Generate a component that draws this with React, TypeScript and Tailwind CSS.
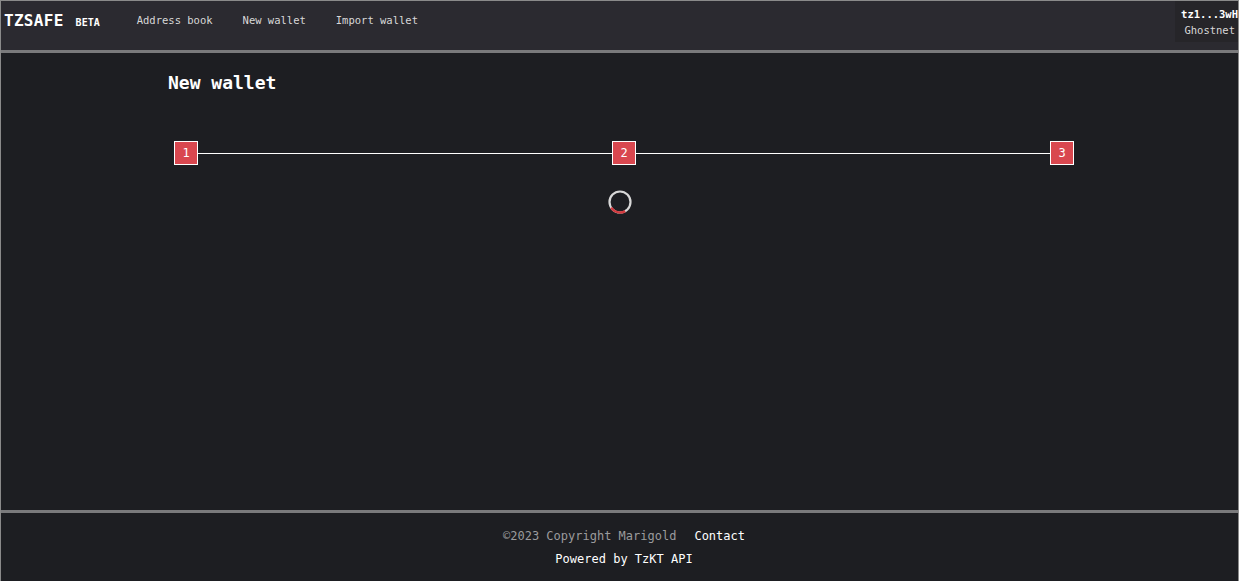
const mono = { fontFamily: '"DejaVu Sans Mono", "Liberation Mono", monospace' };

const Step = ({ n }: { n: number }) => (
  <div className="w-6 h-6 shrink-0 bg-[#d9474f] border border-white flex items-center justify-center text-[12px] text-white">
    {n}
  </div>
);

const Spinner = () => (
  <svg width="26" height="26" viewBox="0 0 26 26">
    <circle cx="13" cy="13" r="10.5" fill="none" stroke="#d8d8d8" strokeWidth="2.2" />
    <path d="M4.2 18.6 A10.5 10.5 0 0 0 18.2 22.1" fill="none" stroke="#d23a3f" strokeWidth="2.4" />
  </svg>
);

const App = () => {
  return (
    <div className="h-screen flex flex-col bg-[#1d1e22] border-l border-t border-r border-[#8a8a8a] text-white" style={mono}>
      {/* header */}
      <header className="h-[52px] shrink-0 bg-[#2b2a30] border-b-[3px] border-[#7a7a7c] flex items-start">
        <div className="flex items-center h-[40px] pl-[3px]">
          <span className="text-[16px] font-bold tracking-[0.3px]">TZSAFE</span>
          <span className="text-[10px] font-bold ml-[12px] mt-[3px]">BETA</span>
        </div>
        <nav className="flex items-center h-[40px] text-[10.5px] text-[#d8d8d8] ml-[37px] gap-[30px]">
          <span>Address book</span>
          <span>New wallet</span>
          <span>Import wallet</span>
        </nav>
        <div className="ml-auto h-[41px] w-[63px] bg-[#262529] flex flex-col items-end justify-center text-[10.5px] leading-[16px]">
          <span className="font-bold">tz1...3wH</span>
          <span className="text-[#d8d8d8] pr-[3px]">Ghostnet</span>
        </div>
      </header>

      {/* main */}
      <main className="flex-1 flex flex-col">
        <div className="ml-[167px] w-[912px] pt-[19px]">
          <h1 className="text-[18px] font-bold leading-[22px]">New wallet</h1>
          <div className="mt-[47px] px-[6px] flex items-center">
            <Step n={1} />
            <div className="flex-1 h-px bg-white" />
            <Step n={2} />
            <div className="flex-1 h-px bg-white" />
            <Step n={3} />
          </div>
        </div>
        <div className="flex justify-center mt-[24px]">
          <Spinner />
        </div>
      </main>

      {/* footer */}
      <footer className="h-[71px] shrink-0 border-t-[3px] border-[#7a7a7c] flex flex-col items-center pl-[9px] pt-[12px] text-[12px] leading-[23px]">
        <div className="flex gap-[18px]">
          <span className="text-[#9b9b9d]">©2023 Copyright Marigold</span>
          <span className="text-white">Contact</span>
        </div>
        <span className="text-white">Powered by TzKT API</span>
      </footer>
    </div>
  );
};

export default App;
